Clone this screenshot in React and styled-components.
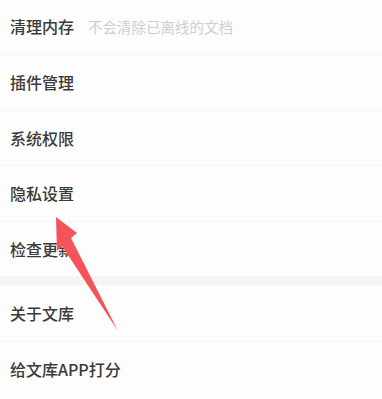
import React from "react";
import styled, { createGlobalStyle } from "styled-components";

const Global = createGlobalStyle`
  html, body { margin: 0; padding: 0; background: #fdfdfd; }
  body { font-family: "Noto Sans CJK SC", "Noto Sans", sans-serif; }
`;

const Page = styled.div`
  position: relative;
  width: 382px;
  height: 399px;
  overflow: hidden;
  background: #fdfdfd;
`;

const Group = styled.div`
  display: flex;
  flex-direction: column;
  margin-top: ${(p) => p.$offset || 0}px;
`;

const Row = styled.div`
  display: flex;
  align-items: center;
  height: 55.5px;
  box-sizing: border-box;
  padding-left: 10px;
  border-top: ${(p) => (p.$first ? "none" : "1px solid #f5f5f5")};
`;

const Label = styled.span`
  font-size: 16px;
  font-weight: 500;
  color: #3a3a3a;
`;

const Hint = styled.span`
  margin-left: 14px;
  font-size: 14.5px;
  color: #cfcfcf;
`;

const Band = styled.div`
  height: 9px;
  background: #f5f5f5;
`;

const Overlay = styled.svg`
  position: absolute;
  left: 0;
  top: 0;
  pointer-events: none;
`;

const groupA = [
  { label: "清理内存", hint: "不会清除已离线的文档" },
  { label: "插件管理" },
  { label: "系统权限" },
  { label: "隐私设置" },
  { label: "检查更新" },
];
const groupB = [{ label: "关于文库" }, { label: "给文库APP打分" }];

export default function App() {
  return (
    <>
      <Global />
      <Page>
        <Group $offset={-1.5}>
          {groupA.map((r, i) => (
            <Row key={r.label} $first={i === 0}>
              <Label>{r.label}</Label>
              {r.hint && <Hint>{r.hint}</Hint>}
            </Row>
          ))}
        </Group>
        <Band />
        <Group>
          {groupB.map((r, i) => (
            <Row key={r.label} $first={i === 0}>
              <Label>{r.label}</Label>
            </Row>
          ))}
        </Group>
        <Overlay width="382" height="399" viewBox="0 0 382 399">
          <polygon
            points="56,217 77,233 71,238 118,331 62,246 57,251"
            fill="#f4535a"
          />
        </Overlay>
      </Page>
    </>
  );
}
